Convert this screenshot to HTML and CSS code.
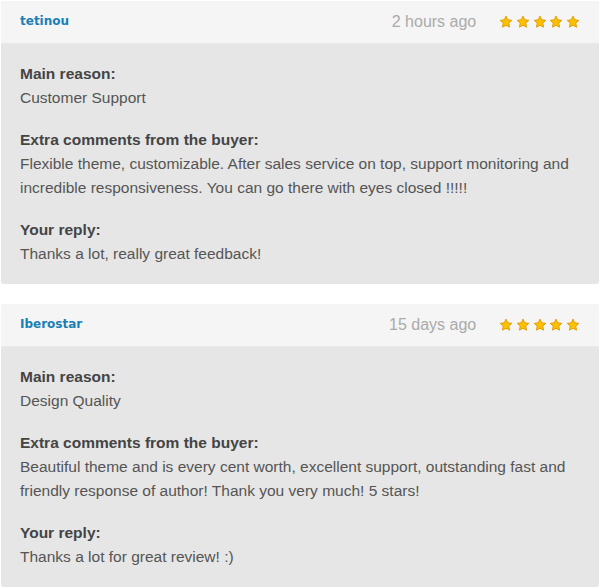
FILE: index.html
```html
<!DOCTYPE html>
<html>
<head>
<meta charset="utf-8">
<link rel="stylesheet" href="styles.css">
</head>
<body>
<div class="list">
  <div class="card">
    <div class="head">
      <a class="name">tetinou</a>
      <span class="time">2 hours ago</span>
      <span class="stars">
        <svg viewBox="0 0 20 20"><path class="st" d="M10 1.6l2.5 5.3 5.8.7-4.3 4 1.1 5.8L10 14.6l-5.1 2.8 1.1-5.8-4.3-4 5.8-.7z"/></svg>
        <svg viewBox="0 0 20 20"><path class="st" d="M10 1.6l2.5 5.3 5.8.7-4.3 4 1.1 5.8L10 14.6l-5.1 2.8 1.1-5.8-4.3-4 5.8-.7z"/></svg>
        <svg viewBox="0 0 20 20"><path class="st" d="M10 1.6l2.5 5.3 5.8.7-4.3 4 1.1 5.8L10 14.6l-5.1 2.8 1.1-5.8-4.3-4 5.8-.7z"/></svg>
        <svg viewBox="0 0 20 20"><path class="st" d="M10 1.6l2.5 5.3 5.8.7-4.3 4 1.1 5.8L10 14.6l-5.1 2.8 1.1-5.8-4.3-4 5.8-.7z"/></svg>
        <svg viewBox="0 0 20 20"><path class="st" d="M10 1.6l2.5 5.3 5.8.7-4.3 4 1.1 5.8L10 14.6l-5.1 2.8 1.1-5.8-4.3-4 5.8-.7z"/></svg>
      </span>
    </div>
    <div class="body">
      <div class="sec">
        <div class="label">Main reason:</div>
        <div class="text">Customer Support</div>
      </div>
      <div class="sec">
        <div class="label">Extra comments from the buyer:</div>
        <div class="text">Flexible theme, customizable. After sales service on top, support monitoring and incredible responsiveness. You can go there with eyes closed !!!!!</div>
      </div>
      <div class="sec">
        <div class="label">Your reply:</div>
        <div class="text">Thanks a lot, really great feedback!</div>
      </div>
    </div>
  </div>
  <div class="card">
    <div class="head">
      <a class="name">Iberostar</a>
      <span class="time">15 days ago</span>
      <span class="stars">
        <svg viewBox="0 0 20 20"><path class="st" d="M10 1.6l2.5 5.3 5.8.7-4.3 4 1.1 5.8L10 14.6l-5.1 2.8 1.1-5.8-4.3-4 5.8-.7z"/></svg>
        <svg viewBox="0 0 20 20"><path class="st" d="M10 1.6l2.5 5.3 5.8.7-4.3 4 1.1 5.8L10 14.6l-5.1 2.8 1.1-5.8-4.3-4 5.8-.7z"/></svg>
        <svg viewBox="0 0 20 20"><path class="st" d="M10 1.6l2.5 5.3 5.8.7-4.3 4 1.1 5.8L10 14.6l-5.1 2.8 1.1-5.8-4.3-4 5.8-.7z"/></svg>
        <svg viewBox="0 0 20 20"><path class="st" d="M10 1.6l2.5 5.3 5.8.7-4.3 4 1.1 5.8L10 14.6l-5.1 2.8 1.1-5.8-4.3-4 5.8-.7z"/></svg>
        <svg viewBox="0 0 20 20"><path class="st" d="M10 1.6l2.5 5.3 5.8.7-4.3 4 1.1 5.8L10 14.6l-5.1 2.8 1.1-5.8-4.3-4 5.8-.7z"/></svg>
      </span>
    </div>
    <div class="body">
      <div class="sec">
        <div class="label">Main reason:</div>
        <div class="text">Design Quality</div>
      </div>
      <div class="sec">
        <div class="label">Extra comments from the buyer:</div>
        <div class="text">Beautiful theme and is every cent worth, excellent support, outstanding fast and friendly response of author! Thank you very much! 5 stars!</div>
      </div>
      <div class="sec">
        <div class="label">Your reply:</div>
        <div class="text">Thanks a lot for great review! :)</div>
      </div>
    </div>
  </div>
</div>
</body>
</html>
```
FILE: styles.css
```css
html, body {
  margin: 0;
  padding: 0;
  background: #ffffff;
}
body {
  font-family: "Liberation Sans", Arial, sans-serif;
  font-size: 15.5px;
  color: #555555;
}
.list {
  display: flex;
  flex-direction: column;
  gap: 20px;
  padding: 1px 1px 0 1px;
}
.card {
  border-radius: 3px;
  overflow: hidden;
  background: #e6e6e6;
}
.head {
  height: 42px;
  background: #f5f5f5;
  border-bottom: 1px solid #e9e9e9;
  display: flex;
  align-items: center;
  padding: 0 19px 0 19px;
}
.name {
  font-family: "DejaVu Sans", Verdana, sans-serif;
  font-weight: bold;
  font-size: 12px;
  color: #1a7fb6;
  margin-top: -2px;
}
.time {
  margin-left: auto;
  color: #aaaaaa;
  font-size: 16px;
}
.stars {
  display: flex;
  gap: 2.7px;
  margin-left: 23px;
}
.stars svg {
  width: 14px;
  height: 14px;
  display: block;
}
.st {
  fill: #fbc000;
  stroke: #e09a00;
  stroke-width: 1.3;
  stroke-linejoin: round;
}
.body {
  padding: 18px 19px 18px 19px;
  display: flex;
  flex-direction: column;
  gap: 18px;
  line-height: 24px;
}
.label {
  font-weight: bold;
  color: #444444;
}
.text {
  color: #555555;
}
```
